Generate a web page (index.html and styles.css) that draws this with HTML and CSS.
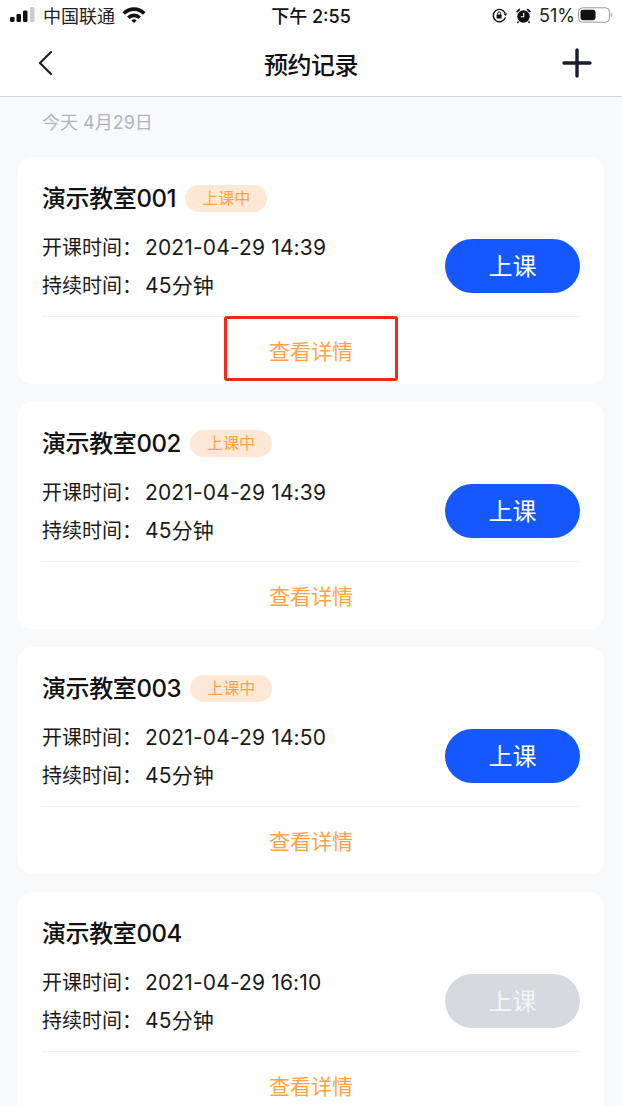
FILE: index.html
```html
<!DOCTYPE html>
<html>
<head>
    <meta charset="utf-8">
    <link rel="stylesheet" href="styles.css">
</head>
<body>
    <div class="header">
        <div class="statusBar">
            <div class="statusLeft">
                <svg class="signal" width="25" height="16" viewBox="0 0 25 16">
                    <rect x="0" y="10" width="4.5" height="5" rx="1.2" fill="#111"/>
                    <rect x="6.5" y="7" width="4.5" height="8" rx="1.2" fill="#111"/>
                    <rect x="13" y="3.5" width="4.5" height="11.5" rx="1.2" fill="#111"/>
                    <rect x="20" y="0" width="4.5" height="15" rx="1.2" fill="#ccc"/>
                </svg>
                <span class="carrier">中国联通</span>
                <svg class="wifi" width="24" height="16" viewBox="0 0 24 16">
                    <path d="M0.5 5.2 A16 16 0 0 1 23.5 5.2 L21 7.8 A12.6 12.6 0 0 0 3 7.8 Z" fill="#111"/>
                    <path d="M5 9.4 A9.8 9.8 0 0 1 19 9.4 L16.4 12 A6.2 6.2 0 0 0 7.6 12 Z" fill="#111"/>
                    <path d="M9.4 13.4 A3.8 3.8 0 0 1 14.6 13.4 L12 16 Z" fill="#111"/>
                </svg>
            </div>
            <div class="statusTime">下午 2:55</div>
            <div class="statusRight">
                <svg width="17" height="17" viewBox="0 0 17 17">
                    <path d="M14.2 6.2 A6.2 6.2 0 1 0 14.4 10.4" fill="none" stroke="#111" stroke-width="1.4"/>
                    <path d="M12.4 6.4 L16.4 6.4 L14.4 9 Z" fill="#111"/>
                    <rect x="5.6" y="7.6" width="5" height="4" rx="0.6" fill="#111"/>
                    <path d="M6.6 7.8 V6.4 A1.5 1.5 0 0 1 9.6 6.4 V7.8" fill="none" stroke="#111" stroke-width="1"/>
                </svg>
                <svg class="alarm" width="17" height="17" viewBox="0 0 17 17">
                    <circle cx="8.5" cy="9.5" r="6.2" fill="#111"/>
                    <path d="M1 4.6 L4.2 1.6 L5.4 2.8 L2.2 5.8 Z M16 4.6 L12.8 1.6 L11.6 2.8 L14.8 5.8 Z" fill="#111"/>
                    <path d="M3.6 14.4 L2.4 16 M13.4 14.4 L14.6 16" stroke="#111" stroke-width="1.4"/>
                    <path d="M8.7 5.8 V9.8 H5.8" fill="none" stroke="#fff" stroke-width="1.1"/>
                </svg>
                <span class="percent">51%</span>
                <svg class="battery" width="35" height="16" viewBox="0 0 35 16">
                    <rect x="0.5" y="0.8" width="31" height="14.4" rx="4" fill="none" stroke="#999"/>
                    <rect x="2.5" y="2.8" width="15" height="10.4" rx="2.4" fill="#111"/>
                    <path d="M33 5.6 A3 3 0 0 1 33 10.4 Z" fill="#aaa"/>
                </svg>
            </div>
        </div>
        <div class="navBar">
            <svg class="navIcon" width="16" height="26" viewBox="0 0 16 26">
                <path d="M14 2 L3 13 L14 24" fill="none" stroke="#1a1d2e" stroke-width="2.2" stroke-linecap="round" stroke-linejoin="round"/>
            </svg>
            <div class="navTitle">预约记录</div>
            <svg class="navIcon" width="32" height="32" viewBox="0 0 32 32">
                <path d="M16 3 V29 M3 16 H29" fill="none" stroke="#1a1d2e" stroke-width="3.4" stroke-linecap="round"/>
            </svg>
        </div>
    </div>

    <div class="dateLabel">今天 4月29日</div>

    <div class="cardList">
        <div class="card">
            <div class="cardMain">
                <div class="cardInfo">
                    <div class="cardTitle"><span>演示教室001</span><span class="tag">上课中</span></div>
                    <div class="infoRow">开课时间：<span class="infoValue">2021-04-29 14:39</span></div>
                    <div class="infoRow">持续时间：<span class="infoValue">45分钟</span></div>
                </div>
                <div class="enterBtn">上课</div>
            </div>
            <div class="cardFoot">查看详情</div>
            <div class="highlightBox"></div>
        </div>
        <div class="card">
            <div class="cardMain">
                <div class="cardInfo">
                    <div class="cardTitle"><span>演示教室002</span><span class="tag">上课中</span></div>
                    <div class="infoRow">开课时间：<span class="infoValue">2021-04-29 14:39</span></div>
                    <div class="infoRow">持续时间：<span class="infoValue">45分钟</span></div>
                </div>
                <div class="enterBtn">上课</div>
            </div>
            <div class="cardFoot">查看详情</div>
        </div>
        <div class="card">
            <div class="cardMain">
                <div class="cardInfo">
                    <div class="cardTitle"><span>演示教室003</span><span class="tag">上课中</span></div>
                    <div class="infoRow">开课时间：<span class="infoValue">2021-04-29 14:50</span></div>
                    <div class="infoRow">持续时间：<span class="infoValue">45分钟</span></div>
                </div>
                <div class="enterBtn">上课</div>
            </div>
            <div class="cardFoot">查看详情</div>
        </div>
        <div class="card">
            <div class="cardMain">
                <div class="cardInfo">
                    <div class="cardTitle"><span>演示教室004</span></div>
                    <div class="infoRow">开课时间：<span class="infoValue">2021-04-29 16:10</span></div>
                    <div class="infoRow">持续时间：<span class="infoValue">45分钟</span></div>
                </div>
                <div class="enterBtn disabled">上课</div>
            </div>
            <div class="cardFoot">查看详情</div>
        </div>
    </div>
</body>
</html>
```

FILE: styles.css
```css
html, body {
    height: 100%;
}

body {
    margin: 0px;
    padding: 0px;
    height: 1106px;
    overflow: hidden;
    background-color: #f8f9fb;
    color: #111;
    font-family: "Inter", "Noto Sans CJK SC", sans-serif;
}

.header {
    height: 96px;
    background-color: #fff;
    border-bottom: 1px solid #d6d6d8;
}

.statusBar {
    height: 30px;
    position: relative;
    display: flex;
    align-items: center;
    justify-content: space-between;
    padding: 0 9px 0 10px;
    font-size: 18px;
}

.statusLeft, .statusRight {
    display: flex;
    align-items: center;
}

.carrier {
    margin-left: 8px;
    color: #222;
}

.wifi {
    margin-left: 7px;
}

.statusTime {
    position: absolute;
    left: 0;
    right: 0;
    text-align: center;
    font-weight: 500;
}

.statusRight svg {
    margin-right: 7px;
}

.statusRight .percent {
    margin-right: 3px;
    color: #222;
}

.statusRight .battery {
    margin-right: 0;
}

.navBar {
    height: 66px;
    display: flex;
    align-items: center;
    justify-content: space-between;
    padding: 0 29px 0 37px;
}

.navTitle {
    font-size: 24px;
    font-weight: 500;
    letter-spacing: -0.5px;
    color: #111;
    margin-left: 8px;
}

.dateLabel {
    padding-left: 42px;
    height: 60px;
    line-height: 52px;
    font-size: 18px;
    color: #b1b4bc;
}

.cardList {
    display: flex;
    flex-direction: column;
    gap: 18px;
    padding: 0 18px;
}

.card {
    position: relative;
    height: 227px;
    flex-shrink: 0;
    box-sizing: border-box;
    padding: 0 24px;
    background-color: #fff;
    border-radius: 14px;
    display: flex;
    flex-direction: column;
}

.cardMain {
    height: 160px;
    flex-shrink: 0;
    box-sizing: border-box;
    display: flex;
    align-items: flex-start;
    justify-content: space-between;
    border-bottom: 1px solid #f0f0f2;
}

.cardTitle {
    display: flex;
    align-items: center;
    height: 28px;
    margin-top: 25px;
    margin-bottom: 19px;
    font-size: 24px;
    font-weight: 500;
    letter-spacing: -0.4px;
    color: #111;
}

.tag {
    margin-left: 9px;
    margin-top: 4px;
    width: 82px;
    height: 27px;
    line-height: 27px;
    border-radius: 14px;
    text-align: center;
    font-size: 16px;
    font-weight: 400;
    letter-spacing: 0;
    color: #ffa345;
    background-color: #ffe9d6;
}

.infoRow {
    height: 38px;
    line-height: 38px;
    font-size: 20px;
    color: #1a1a1a;
}

.infoValue {
    margin-left: 3px;
    font-size: 21px;
    letter-spacing: 0.15px;
}

.enterBtn {
    width: 135px;
    height: 54px;
    margin-top: 82px;
    line-height: 56px;
    border-radius: 27px;
    text-align: center;
    font-size: 24px;
    color: #fff;
    background-color: #1558ff;
}

.enterBtn.disabled {
    background-color: #d6d9de;
    color: #f4f5f6;
}

.cardFoot {
    flex: 1;
    display: flex;
    align-items: center;
    justify-content: center;
    padding-bottom: 2px;
    font-size: 21px;
    color: #ffa345;
}

/* red annotation drawn on the screenshot */
.highlightBox {
    position: absolute;
    left: 206px;
    top: 159px;
    width: 174px;
    height: 65px;
    box-sizing: border-box;
    border: 3px solid #f5261b;
    border-radius: 3px;
}
```
